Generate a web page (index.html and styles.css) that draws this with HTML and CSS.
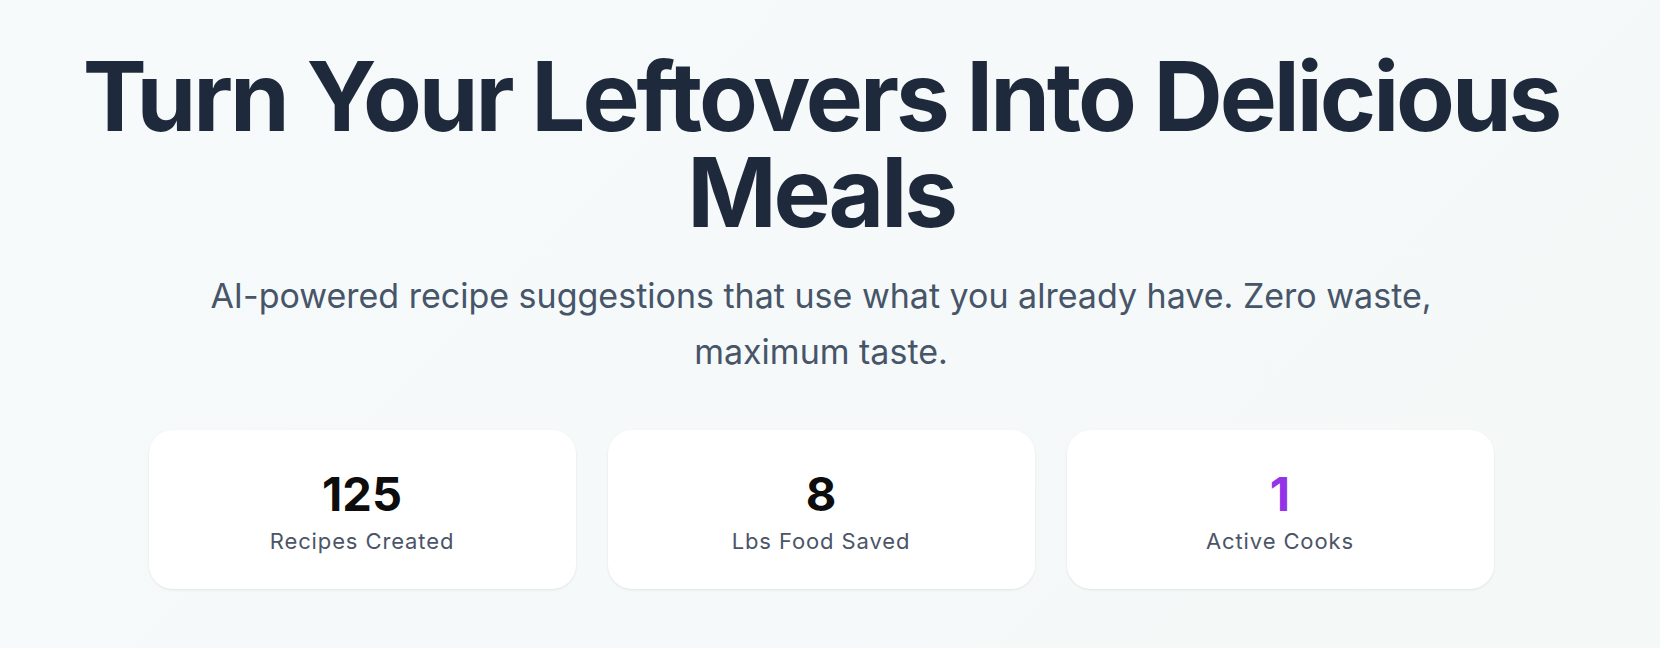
FILE: index.html
```html
<!DOCTYPE html>
<html lang="en">
<head>
<meta charset="utf-8">
<title>Leftovers</title>
<link rel="stylesheet" href="styles.css">
</head>
<body>
<main class="hero">
  <h1 class="hero-title">Turn Your Leftovers Into Delicious Meals</h1>
  <p class="hero-sub">AI-powered recipe suggestions that use what you already have. Zero waste, maximum taste.</p>
  <section class="stats">
    <div class="stat-card">
      <div class="stat-value">125</div>
      <div class="stat-label">Recipes Created</div>
    </div>
    <div class="stat-card">
      <div class="stat-value">8</div>
      <div class="stat-label">Lbs Food Saved</div>
    </div>
    <div class="stat-card">
      <div class="stat-value stat-value-purple">1</div>
      <div class="stat-label">Active Cooks</div>
    </div>
  </section>
</main>
</body>
</html>
```
FILE: styles.css
```css
html, body {
  margin: 0;
  padding: 0;
}
body {
  width: 1660px;
  height: 648px;
  overflow: hidden;
  background: linear-gradient(135deg, #f7fafb 0%, #f4f8f7 100%);
  font-family: Inter, "Noto Sans", sans-serif;
}
.hero {
  display: flex;
  flex-direction: column;
  align-items: center;
  padding: 48px 18px 0 0;
}
.hero-title {
  margin: 0;
  font-size: 96px;
  line-height: 96px;
  font-weight: 700;
  letter-spacing: -0.032em;
  color: #1e293b;
  text-align: center;
  max-width: 1500px;
}
.hero-sub {
  margin: 28px 0 0;
  font-size: 34px;
  line-height: 56px;
  font-weight: 400;
  color: #475569;
  text-align: center;
  max-width: 1240px;
}
.stats {
  margin-top: 50px;
  display: grid;
  grid-template-columns: repeat(3, 427px);
  gap: 32px;
}
.stat-card {
  background: #ffffff;
  border-radius: 24px;
  box-shadow: 0 1px 3px rgba(15, 23, 42, 0.06), 0 1px 2px rgba(15, 23, 42, 0.03);
  padding: 40px 24px 35px;
  display: flex;
  flex-direction: column;
  align-items: center;
}
.stat-value {
  font-size: 47px;
  line-height: 48px;
  font-weight: 700;
  color: #0d0d0d;
}
.stat-value-purple {
  color: #9333ea;
}
.stat-label {
  margin-top: 10px;
  font-size: 22px;
  line-height: 26px;
  color: #4b5567;
  letter-spacing: 0.04em;
}
```
